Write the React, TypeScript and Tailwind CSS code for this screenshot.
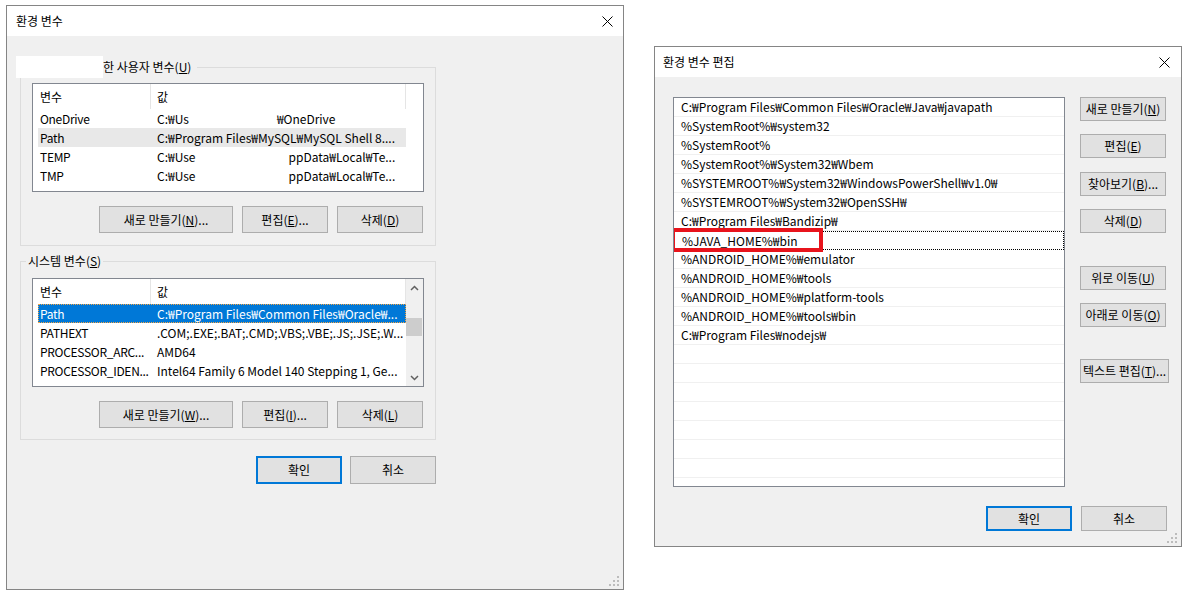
import React from "react";

const font = "font-['Noto_Sans_CJK_KR',sans-serif]";

function CloseX() {
  return (
    <svg width="11" height="11" viewBox="0 0 11 11">
      <path d="M0.5 0.5L10.5 10.5M10.5 0.5L0.5 10.5" stroke="#000" strokeWidth="1" />
    </svg>
  );
}

function Grip() {
  return (
    <svg width="11" height="11" viewBox="0 0 11 11">
      {[
        [8, 0],
        [4, 4],
        [8, 4],
        [0, 8],
        [4, 8],
        [8, 8],
      ].map(([x, y]) => (
        <rect key={`${x}-${y}`} x={x} y={y} width="2" height="2" fill="#bcbcbc" />
      ))}
    </svg>
  );
}

function Btn({ className, children }: { className: string; children: React.ReactNode }) {
  return (
    <div className={`flex items-center justify-center bg-[#e1e1e1] text-[12px] leading-none text-black whitespace-nowrap ${className}`}>
      {children}
    </div>
  );
}

type Row = { name: string; value: React.ReactNode; state?: "hover" | "selected" };

const userRows: Row[] = [
  {
    name: "OneDrive",
    value: (
      <>
        <span>C:₩Us</span>
        <span className="ml-[88px]">₩OneDrive</span>
      </>
    ),
  },
  { name: "Path", value: "C:₩Program Files₩MySQL₩MySQL Shell 8....", state: "hover" },
  {
    name: "TEMP",
    value: (
      <>
        <span>C:₩Use</span>
        <span className="ml-[93px]">ppData₩Local₩Te...</span>
      </>
    ),
  },
  {
    name: "TMP",
    value: (
      <>
        <span>C:₩Use</span>
        <span className="ml-[93px]">ppData₩Local₩Te...</span>
      </>
    ),
  },
];

const systemRows: Row[] = [
  { name: "Path", value: "C:₩Program Files₩Common Files₩Oracle₩...", state: "selected" },
  { name: "PATHEXT", value: ".COM;.EXE;.BAT;.CMD;.VBS;.VBE;.JS;.JSE;.W..." },
  { name: "PROCESSOR_ARC...", value: "AMD64" },
  { name: "PROCESSOR_IDEN...", value: "Intel64 Family 6 Model 140 Stepping 1, Ge..." },
];

function VarList({ rows, scroll }: { rows: Row[]; scroll?: boolean }) {
  return (
    <div className="flex h-[109px] w-[392px] border border-[#828790] bg-white">
      <div className="flex-1">
        <div className="flex h-[25px] items-center pl-[5px] text-[12px]">
          <div className="flex h-full w-[113px] items-center border-r border-[#e5e5e5] pl-[2px]">변수</div>
          <div className="flex h-full w-[255px] items-center border-r border-[#e5e5e5] pl-[6px]">값</div>
        </div>
        {rows.map((r) => (
          <div
            key={r.name}
            className={`ml-[5px] flex h-[19px] w-[368px] items-center text-[12px] whitespace-nowrap ${
              r.state === "selected"
                ? "bg-[#0078d7] text-white outline-1 outline-dotted -outline-offset-1 outline-[#f7a543]"
                : r.state === "hover"
                  ? "bg-[#e8e8e8] text-black"
                  : "text-black"
            }`}
          >
            <div className="w-[113px] shrink-0 pl-[2px] tracking-[-0.3px]">{r.name}</div>
            <div className="flex-1 overflow-hidden pl-[6px]">{r.value}</div>
          </div>
        ))}
      </div>
      {scroll ? (
        <div className="flex w-[17px] flex-col bg-[#f0f0f0]">
          <div className="flex h-[17px] items-center justify-center">
            <svg width="9" height="6" viewBox="0 0 9 6">
              <path d="M1 5L4.5 1.5L8 5" fill="none" stroke="#606060" strokeWidth="1.5" />
            </svg>
          </div>
          <div className="flex-1">
            <div className="mt-[22px] h-[18px] w-[16px] bg-[#cdcdcd]" />
          </div>
          <div className="flex h-[17px] items-center justify-center">
            <svg width="9" height="6" viewBox="0 0 9 6">
              <path d="M1 1L4.5 4.5L8 1" fill="none" stroke="#606060" strokeWidth="1.5" />
            </svg>
          </div>
        </div>
      ) : (
        <div className="w-[17px]" />
      )}
    </div>
  );
}

function EnvDialog() {
  return (
    <div className="ml-[6px] mt-[5px] flex h-[585px] w-[618px] flex-col border border-[#858585] bg-[#f0f0f0]">
      <div className="flex h-[30px] items-center justify-between bg-white pl-[9px] pr-[10px] text-[12px] text-black">
        <span>환경 변수</span>
        <CloseX />
      </div>

      <fieldset className="ml-[13px] mt-[20px] w-[416px] border border-[#dcdcdc] pb-[12px]">
        <legend className="-ml-[5px] flex h-[22px] items-center pr-[6px] text-[12px] text-black">
          <span className="h-[22px] w-[87px] shrink-0 bg-white" />
          <span className="shrink-0 whitespace-nowrap">
            한 사용자 변수(<u>U</u>)
          </span>
        </legend>
        <div className="ml-[11px] mt-[5px]">
          <VarList rows={userRows} />
        </div>
        <div className="mr-[12px] mt-[14px] flex justify-end gap-[9px]">
          <Btn className="h-[27px] w-[134px] border border-[#adadad]">
            새로 만들기(<u>N</u>)...
          </Btn>
          <Btn className="h-[27px] w-[86px] border border-[#adadad]">
            편집(<u>E</u>)...
          </Btn>
          <Btn className="h-[27px] w-[86px] border border-[#adadad]">
            삭제(<u>D</u>)
          </Btn>
        </div>
      </fieldset>

      <fieldset className="ml-[13px] mt-[4px] w-[416px] border border-[#dcdcdc] pb-[11px]">
        <legend className="ml-[5px] flex h-[22px] items-center px-[2px] text-[12px] text-black">
          시스템 변수(<u>S</u>)
        </legend>
        <div className="ml-[11px] mt-[6px]">
          <VarList rows={systemRows} scroll />
        </div>
        <div className="mr-[12px] mt-[14px] flex justify-end gap-[9px]">
          <Btn className="h-[27px] w-[134px] border border-[#adadad]">
            새로 만들기(<u>W</u>)...
          </Btn>
          <Btn className="h-[27px] w-[86px] border border-[#adadad]">
            편집(<u>I</u>)...
          </Btn>
          <Btn className="h-[27px] w-[86px] border border-[#adadad]">
            삭제(<u>L</u>)
          </Btn>
        </div>
      </fieldset>

      <div className="ml-[13px] mt-[16px] flex w-[416px] justify-end gap-[8px]">
        <Btn className="h-[28px] w-[86px] border-2 border-[#0078d7]">확인</Btn>
        <Btn className="h-[28px] w-[86px] border border-[#adadad]">취소</Btn>
      </div>

      <div className="mt-auto flex justify-end pb-[2px] pr-[3px]">
        <Grip />
      </div>
    </div>
  );
}

const pathRows = [
  "C:₩Program Files₩Common Files₩Oracle₩Java₩javapath",
  "%SystemRoot%₩system32",
  "%SystemRoot%",
  "%SystemRoot%₩System32₩Wbem",
  "%SYSTEMROOT%₩System32₩WindowsPowerShell₩v1.0₩",
  "%SYSTEMROOT%₩System32₩OpenSSH₩",
  "C:₩Program Files₩Bandizip₩",
  "%JAVA_HOME%₩bin",
  "%ANDROID_HOME%₩emulator",
  "%ANDROID_HOME%₩tools",
  "%ANDROID_HOME%₩platform-tools",
  "%ANDROID_HOME%₩tools₩bin",
  "C:₩Program Files₩nodejs₩",
  "", "", "", "", "", "", "", "",
];

function EditDialog() {
  return (
    <div className="ml-[30px] mt-[46px] flex h-[501px] w-[528px] flex-col border border-[#858585] bg-[#f0f0f0]">
      <div className="flex h-[30px] items-center justify-between bg-white pl-[8px] pr-[11px] text-[12px] text-black">
        <span>환경 변수 편집</span>
        <CloseX />
      </div>

      <div className="ml-[18px] mt-[20px] flex">
        <div className="relative h-[390px] w-[392px] overflow-hidden border border-[#828790] bg-white">
          {pathRows.map((p, i) => (
            <div
              key={i}
              className={`flex h-[19px] items-center pl-[7px] text-[12px] text-black whitespace-nowrap ${
                i === 7 ? "border border-dotted border-black pl-[6px]" : "border-b border-[#f0f0f0]"
              }`}
            >
              {p}
            </div>
          ))}
          <div className="absolute left-[-3px] top-[130px] h-[24px] w-[152px] border-4 border-[#e8141c]" />
        </div>

        <div className="ml-[15px] flex flex-col">
          <Btn className="h-[24px] w-[86px] border border-[#adadad]">
            새로 만들기(<u>N</u>)
          </Btn>
          <Btn className="mt-[13px] h-[24px] w-[86px] border border-[#adadad]">
            편집(<u>E</u>)
          </Btn>
          <Btn className="mt-[14px] h-[24px] w-[86px] border border-[#adadad]">
            찾아보기(<u>B</u>)...
          </Btn>
          <Btn className="mt-[13px] h-[24px] w-[86px] border border-[#adadad]">
            삭제(<u>D</u>)
          </Btn>
          <Btn className="mt-[33px] h-[24px] w-[86px] border border-[#adadad]">
            위로 이동(<u>U</u>)
          </Btn>
          <Btn className="mt-[13px] h-[24px] w-[86px] border border-[#adadad]">
            아래로 이동(<u>O</u>)
          </Btn>
          <Btn className="mt-[32px] h-[24px] w-[89px] border border-[#adadad]">
            텍스트 편집(<u>T</u>)...
          </Btn>
        </div>
      </div>

      <div className="mt-[19px] flex justify-end gap-[9px] pr-[14px]">
        <Btn className="h-[25px] w-[86px] border-2 border-[#0078d7]">확인</Btn>
        <Btn className="h-[25px] w-[86px] border border-[#adadad]">취소</Btn>
      </div>

      <div className="mt-auto flex justify-end pb-[2px] pr-[3px]">
        <Grip />
      </div>
    </div>
  );
}

export default function App() {
  return (
    <div className={`flex h-[595px] w-[1198px] items-start bg-white ${font}`}>
      <EnvDialog />
      <EditDialog />
    </div>
  );
}
